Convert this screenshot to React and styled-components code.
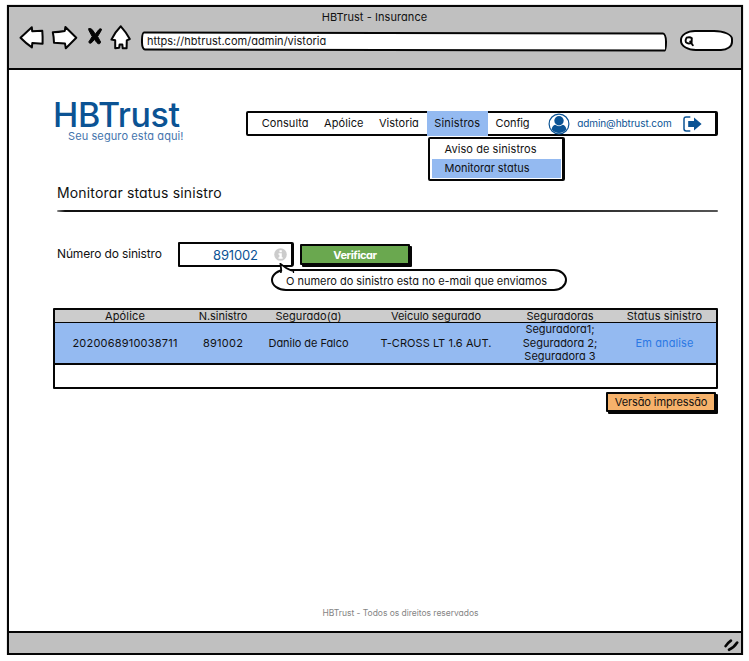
import React from 'react';
import styled, { createGlobalStyle, css } from 'styled-components';

const ink = '#050505';
const blue = '#0b5394';
const selected = '#94baf1';

const GlobalStyle = createGlobalStyle`
  *, *::before, *::after { box-sizing: border-box; }
  body {
    margin: 0;
    background: #fff;
    color: #111;
    font: 400 11px/14px Inter, "Liberation Sans", sans-serif;
    font-feature-settings: "cv11";
  }
`;

/* ---------- browser window ---------- */

const Window = styled.div`
  display: flex;
  flex-direction: column;
  width: 736px;
  height: 650px;
  margin: 5px 0 0 7px;
  border: 2px solid ${ink};
  box-shadow: 0 0 1px #777;
  background: #fff;
`;

const Chrome = styled.header`
  height: 63px;
  border-bottom: 2px solid ${ink};
  background: #c0c0c0;
`;

const WindowTitle = styled.div`
  height: 18px;
  padding-right: 1px;
  line-height: 21px;
  text-align: center;
  letter-spacing: 0.07px;
`;

const Toolbar = styled.div`
  display: flex;
  align-items: flex-start;
  height: 26px;
  padding-left: 10px;
`;

const ToolIcon = styled.svg`
  flex: none;
  width: ${p => p.$w}px;
  height: 26px;
  margin-right: ${p => p.$gap}px;
  overflow: visible;
  fill: #fff;
  stroke: ${ink};
  stroke-width: 2;
  stroke-linejoin: round;
  stroke-linecap: round;
`;

const AddressBar = styled.div`
  position: relative;
  width: 526px;
  height: 19px;
  margin-top: 7px;
  padding-left: 6px;
  line-height: 19px;
  letter-spacing: 0.03px;

  &::before {
    content: '';
    position: absolute;
    inset: 0;
    z-index: 0;
    border: 2px solid ${ink};
    border-radius: 3px 4px 2px 4px / 8px 9px 9px 8px;
    background: #fff;
    transform: rotate(0.11deg);
  }
`;

const AddressText = styled.span`
  position: relative;
`;

const SearchBox = styled.div`
  width: 53px;
  height: 21px;
  margin: 5px 0 0 13px;
  padding: 4px 0 0 2px;
  border: 2px solid ${ink};
  border-radius: 15px 19px 12px 16px / 10px 9px 9px 10px;
  background: #fff;
`;

const SearchIcon = styled.svg`
  display: block;
  width: 11px;
  height: 11px;
  fill: none;
  stroke: ${ink};
  stroke-width: 1.9;
  stroke-linecap: round;
`;

const StatusBar = styled.div`
  display: flex;
  justify-content: flex-end;
  height: 22px;
  border-top: 2px solid ${ink};
  background: #c0c0c0;
`;

const ResizeGrip = styled.svg`
  width: 15px;
  height: 14px;
  margin: 5px 2px 0 0;
  fill: none;
  stroke: ${ink};
  stroke-width: 2.6;
  stroke-linecap: round;
`;

/* ---------- page ---------- */

const Page = styled.main`
  flex: 1;
  display: flex;
  flex-direction: column;
  padding: 30px 23px 12px 44px;
`;

const PageHeader = styled.div`
  display: flex;
  justify-content: space-between;
  height: 43px;
`;

const Brand = styled.div`
  color: ${blue};
`;

const BrandName = styled.div`
  font-size: 34px;
  font-weight: 550;
  line-height: 29px;
  letter-spacing: -0.4px;
`;

const Tagline = styled.div`
  padding-left: 15px;
  color: #4474ac;
  letter-spacing: 0.1px;
`;

const Nav = styled.nav`
  display: flex;
  align-items: center;
  width: 472px;
  height: 25px;
  margin-top: 11px;
  padding-left: 6px;
  border: 2px solid ${ink};
  border-right-width: 3px;
  border-radius: 2px;
`;

const NavItem = styled.div`
  position: relative;
  padding: 0 7.7px;
  line-height: 25px;
  letter-spacing: ${p => p.$track || 0}px;
  ${p => p.$active && css`background: ${selected};`}
`;

const Dropdown = styled.div`
  position: absolute;
  top: 26px;
  left: 1px;
  z-index: 2;
  width: 137px;
  padding: 1px 1px 1px 2px;
  border: 2px solid ${ink};
  border-width: 2px 3px 2px 2px;
  border-radius: 2px;
  background: #fff;
`;

const DropdownItem = styled.div`
  height: 19px;
  padding-left: 13px;
  line-height: 18px;
  letter-spacing: ${p => p.$track}px;
  ${p => p.$active && css`background: ${selected};`}
`;

const UserIcon = styled.svg`
  width: 22px;
  height: 22px;
  margin-left: 11px;
`;

const Email = styled.span`
  margin: -2px 11px 0 7px;
  color: ${blue};
  font-size: 10px;
  letter-spacing: -0.09px;
`;

const ExitIcon = styled.svg`
  width: 19px;
  height: 16px;
`;

const Heading = styled.h1`
  margin: 40px 0 0 4px;
  font-size: 14px;
  font-weight: 400;
  line-height: 20px;
  letter-spacing: 0.16px;
`;

const Divider = styled.div`
  height: 2px;
  margin: 7px 0 0 4px;
  border-radius: 2px;
  background: linear-gradient(to right, #888, #111 8px, #222 75%, #555);
`;

const Form = styled.div`
  display: flex;
  height: 25px;
  margin-top: 30px;
  padding-left: 4px;
`;

const Label = styled.label`
  width: 121px;
  font-size: 12px;
  line-height: 24px;
  letter-spacing: -0.15px;
`;

const Field = styled.div`
  position: relative;
  display: flex;
  align-items: center;
  justify-content: space-between;
  width: 116px;
  height: 25px;
  padding: 0 4px 0 33px;
  border: 2px solid ${ink};
  border-right-width: 3px;
  border-radius: 1px 2px 3px 1px;
  color: ${blue};
  font-size: 13px;
  letter-spacing: -0.15px;
`;

const InfoIcon = styled.svg`
  width: 13px;
  height: 13px;
  margin-top: -1px;
`;

const Callout = styled.div`
  position: absolute;
  top: 25px;
  left: 91px;
  width: 296px;
  height: 22px;
  padding-left: 13px;
  border: 2px solid ${ink};
  border-radius: 14px 13px 13px 15px / 11px;
  background: #fff;
  color: #111;
  font-size: 11px;
  line-height: 20px;
  white-space: nowrap;
  letter-spacing: -0.03px;
`;

const CalloutTail = styled.svg`
  position: absolute;
  top: -8px;
  left: 6px;
  width: 16px;
  height: 10px;
  fill: #fff;
  stroke: ${ink};
  stroke-width: 1.8;
`;

const Button = styled.button`
  border: 2px solid ${ink};
  border-radius: 1px;
  box-shadow: 2px 2px 0 ${ink};
  font: inherit;
  padding: 0;
  white-space: nowrap;
`;

const VerifyButton = styled(Button)`
  width: 110px;
  height: 21px;
  margin: 2px 0 0 6px;
  background: #6aa84f;
  color: #fff;
  font-weight: 700;
  letter-spacing: -0.4px;
`;

const PrintButton = styled(Button)`
  align-self: flex-end;
  width: 110px;
  height: 20px;
  margin: 3px 2px 0 0;
  background: #f6b26b;
  color: #111;
  letter-spacing: -0.1px;
`;

/* ---------- claims table ---------- */

const Table = styled.div`
  height: 81px;
  margin-top: 41px;
  border: 2px solid ${ink};
  border-radius: 1px;
`;

const Row = styled.div`
  display: grid;
  grid-template-columns: 140px 56px 115px 140px 108px 101px;
  align-items: center;
  text-align: center;
  white-space: nowrap;
`;

const HeadRow = styled(Row)`
  height: 13px;
  border-bottom: 1px solid ${ink};
  background: #ccc;
  line-height: 11px;
`;

const DataRow = styled(Row)`
  height: 42px;
  border-bottom: 2px solid ${ink};
  background: ${selected};
`;

const Cell = styled.div`
  letter-spacing: ${p => p.$track || 0}px;
`;

const StatusCell = styled(Cell)`
  color: #2b78e4;
`;

const Insurer = styled.div`
  height: 13.5px;
  line-height: 13.5px;
`;

const PageFooter = styled.footer`
  margin: auto 0 0 30px;
  color: #858585;
  font-size: 8.5px;
  line-height: 12px;
  text-align: center;
  letter-spacing: -0.03px;
`;

const columns = [
  ['Apólice', 0.17],
  ['N.sinistro', -0.06],
  ['Segurado(a)', 0.06],
  ['Veiculo segurado', -0.05],
  ['Seguradoras', -0.03],
  ['Status sinistro', 0.12],
];

const claim = [
  ['2020068910038711', 0.21],
  ['891002', 0.26],
  ['Danilo de Falco', -0.06],
  ['T-CROSS LT 1.6 AUT.', 0.05],
];

const insurers = ['Seguradora1;', 'Seguradora 2;', 'Seguradora 3'];

export default function App() {
  return (
    <>
      <GlobalStyle />
      <Window>
        <Chrome>
          <WindowTitle>HBTrust - Insurance</WindowTitle>
          <Toolbar>
            <ToolIcon $w={26} $gap={6} viewBox="0 0 26 26">
              <path d="M1.5 12.8 12.8 2.3 13.2 6.2 23.3 5.8Q23.8 12 23.6 18.7L13.3 18 12.9 22.4Q6.5 18 1.5 12.8Z" />
            </ToolIcon>
            <ToolIcon $w={26} $gap={10} viewBox="0 0 26 26">
              <path d="M1.8 7.2Q7.5 7 13.8 5.9L14.4 2 25.3 12.8 14.8 23.3 14 18.6 3 17.8Q2.9 12 1.8 7.2Z" />
            </ToolIcon>
            <ToolIcon $w={16} $gap={8} viewBox="0 0 16 26">
              <path
                d="M2 3.5Q4.2 3 5.8 5.3L8.3 9.2 11.5 5Q12.8 3.2 14.4 4L14.2 5.5 10.6 11.5 13.6 17 12.7 18.7Q11 19.3 9.8 17.5L7.5 14.5 4.2 18Q2.6 18.7 1.7 17.2L5.2 11.5 2 5.5Z"
                fill={ink}
                strokeWidth="1"
              />
            </ToolIcon>
            <ToolIcon $w={20} $gap={10} viewBox="0 0 20 26">
              <path d="M9.8 1.3Q15 7 18.8 14L15.8 15.4 15.6 23.2H11.7L11.3 19.4H8.6L8.2 22.7 4.2 23.2V15.3L.4 14.6Q3.7 7.5 9.8 1.3Z" />
            </ToolIcon>
            <AddressBar>
              <AddressText>https://hbtrust.com/admin/vistoria</AddressText>
            </AddressBar>
            <SearchBox>
              <SearchIcon viewBox="0 0 11 11">
                <path d="M2.6 1.7Q5.8.5 7.8 2.2L7.6 6.7Q4.3 8.5 2 6.3 1 4 2.6 1.7ZM6.2 5.5 8.8 9.2" />
              </SearchIcon>
            </SearchBox>
          </Toolbar>
        </Chrome>

        <Page>
          <PageHeader>
            <Brand>
              <BrandName>HBTrust</BrandName>
              <Tagline>Seu seguro esta aqui!</Tagline>
            </Brand>
            <Nav>
              <NavItem $track={0.05}>Consulta</NavItem>
              <NavItem $track={0.1}>Apólice</NavItem>
              <NavItem>Vistoria</NavItem>
              <NavItem $track={0.15} $active>
                Sinistros
                <Dropdown>
                  <DropdownItem $track={0.07}>Aviso de sinistros</DropdownItem>
                  <DropdownItem $track={-0.04} $active>Monitorar status</DropdownItem>
                </Dropdown>
              </NavItem>
              <NavItem $track={-0.12}>Config</NavItem>
              <UserIcon viewBox="0 0 22 22">
                <circle cx="11" cy="11" r="9.9" fill="#fff" stroke={blue} strokeWidth="1.2" />
                <circle cx="11" cy="7.8" r="4.7" fill={blue} />
                <path d="M3.6 16.2Q4.4 12.6 7.2 11.8 11 14.6 14.8 11.8 17.6 12.6 18.4 16.2 15.5 20 11 20T3.6 16.2Z" fill={blue} />
              </UserIcon>
              <Email>admin@hbtrust.com</Email>
              <ExitIcon viewBox="0 0 19 16">
                <path d="M7.3 1H3.2Q1 1 1 3.2V12.8Q1 15 3.2 15H7.3" fill="none" stroke={blue} strokeWidth="1.5" />
                <path d="M5.2 5H11V1.4L18.6 8 11 14.4V11H5.2Z" fill={blue} />
              </ExitIcon>
            </Nav>
          </PageHeader>

          <Heading>Monitorar status sinistro</Heading>
          <Divider />

          <Form>
            <Label>Número do sinistro</Label>
            <Field>
              891002
              <InfoIcon viewBox="0 0 13 13">
                <circle cx="6.5" cy="6.5" r="6.3" fill="#ccc" />
                <path d="M5.5 2.2H7.8V4.2H5.5ZM4.5 5.3H7.8V9.2H8.7V10.7H4.5V9.2H5.4V6.8H4.5Z" fill="#fff" />
              </InfoIcon>
              <Callout>
                <CalloutTail viewBox="0 0 16 10">
                  <path d="M1.8 10 2.3 7.8 1.5.9Q7 5.8 14.2 8.4V10" />
                  <path d="M2.8 9.4H13.8" stroke="#fff" />
                </CalloutTail>
                O numero do sinistro esta no e-mail que enviamos
              </Callout>
            </Field>
            <VerifyButton>Verificar</VerifyButton>
          </Form>

          <Table>
            <HeadRow>
              {columns.map(([name, track]) => (
                <Cell key={name} $track={track}>{name}</Cell>
              ))}
            </HeadRow>
            <DataRow>
              {claim.map(([value, track]) => (
                <Cell key={value} $track={track}>{value}</Cell>
              ))}
              <Cell>
                {insurers.map(name => (
                  <Insurer key={name}>{name}</Insurer>
                ))}
              </Cell>
              <StatusCell $track={0.1}>Em analise</StatusCell>
            </DataRow>
          </Table>
          <PrintButton>Versão impressão</PrintButton>

          <PageFooter>HBTrust - Todos os direitos reservados</PageFooter>
        </Page>

        <StatusBar>
          <ResizeGrip viewBox="0 0 15 14">
            <path d="M1.6 8.2Q3.5 5 6.9 2.6M5 11.8Q10 9.5 13.2 4.5" />
          </ResizeGrip>
        </StatusBar>
      </Window>
    </>
  );
}
